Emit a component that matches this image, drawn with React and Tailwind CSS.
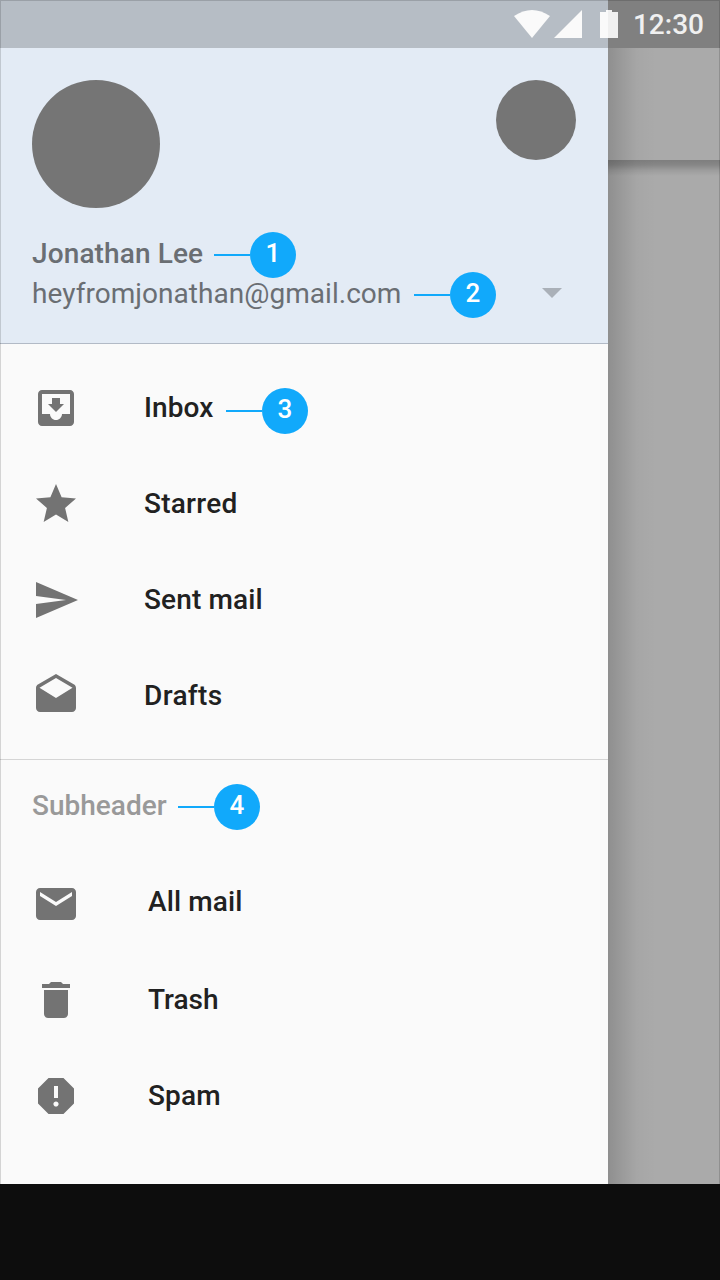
import React from "react";

const ICONS = {
  inbox:
    "M19 3H4.99c-1.11 0-1.98.9-1.98 2L3 19c0 1.1.88 2 1.99 2H19c1.1 0 2-.9 2-2V5c0-1.1-.9-2-2-2zm0 12h-4c0 1.66-1.35 3-3 3s-3-1.34-3-3H4.99V5H19v10zm-3-5h-2V7h-4v3H8l4 4 4-4z",
  star: "M12 17.27L18.18 21l-1.64-7.03L22 9.24l-7.19-.61L12 2 9.19 8.63 2 9.24l5.46 4.73L5.82 21z",
  send: "M2.01 21L23 12 2.01 3 2 10l15 2-15 2z",
  drafts:
    "M21.99 8c0-.72-.37-1.35-.94-1.7L12 1 2.95 6.3C2.38 6.65 2 7.28 2 8v10c0 1.1.9 2 2 2h16c1.1 0 2-.9 2-2l-.01-10zM12 13L3.74 7.84 12 3l8.26 4.84L12 13z",
  mail: "M20 4H4c-1.1 0-1.99.9-1.99 2L2 18c0 1.1.9 2 2 2h16c1.1 0 2-.9 2-2V6c0-1.1-.9-2-2-2zm0 4l-8 5-8-5V6l8 5 8-5v2z",
  trash:
    "M6 19c0 1.1.9 2 2 2h8c1.1 0 2-.9 2-2V7H6v12zM19 4h-3.5l-1-1h-5l-1 1H5v2h14V4z",
  spam: "M15.73 3H8.27L3 8.27v7.46L8.27 21h7.46L21 15.73V8.27L15.73 3zM12 17.3c-.72 0-1.3-.58-1.3-1.3 0-.72.58-1.3 1.3-1.3.72 0 1.3.58 1.3 1.3 0 .72-.58 1.3-1.3 1.3zm1-4.3h-2V7h2v6z",
};

function Icon({ name }) {
  return (
    <svg viewBox="0 0 24 24" className="size-12 shrink-0 fill-[#737373]">
      <path d={ICONS[name]} />
    </svg>
  );
}

function Callout({ n, className }) {
  return (
    <span className={`absolute flex items-center ${className}`}>
      <span className="h-0.5 w-9 bg-[#11a9fb]" />
      <span className="flex size-[46px] items-center justify-center rounded-full bg-[#11a9fb] text-[26px] leading-none font-medium text-white">
        <span className="-mt-1">{n}</span>
      </span>
    </span>
  );
}

function Item({ icon, label, labelClass, children }) {
  return (
    <li className="relative flex h-24 items-center pl-8">
      <Icon name={icon} />
      <span className={`text-[28px] leading-8 font-medium text-[#212121] ${labelClass}`}>{label}</span>
      {children}
    </li>
  );
}

export default function App() {
  return (
    <div className="relative flex h-[1280px] w-[720px] flex-col overflow-hidden bg-[#0d0d0d] font-[Roboto,sans-serif]">
      <div className="relative flex h-[1184px] overflow-hidden bg-[#aaaaaa]">
        <aside className="w-[608px] shrink-0 bg-[#fafafa]">
          <header className="relative h-[344px] border-b border-[#b2bac6] bg-[#e3ebf5] px-8 pt-20">
            <div className="flex items-start justify-between">
              <div className="size-32 rounded-full bg-[#757575]" />
              <div className="size-20 rounded-full bg-[#757575]" />
            </div>
            <div className="mt-[26px] h-10 text-[28px] leading-10 font-medium tracking-[0.12px] text-[#6a6e73]">Jonathan Lee</div>
            <div className="flex h-10 items-center justify-between pr-3.5 text-[28px] leading-10 tracking-[0.04px] text-[#6a6e73]">
              heyfromjonathan@gmail.com
              <svg viewBox="0 0 20 10" className="-mt-0.5 h-2.5 w-5 fill-[#aab0b8]">
                <path d="M0 0h20L10 10z" />
              </svg>
            </div>
            <Callout n="1" className="top-[232px] left-[214px]" />
            <Callout n="2" className="top-[272px] left-[414px]" />
          </header>
          <ul className="h-[416px] border-b border-[#d5d5d5] pt-4">
            <Item icon="inbox" label="Inbox" labelClass="ml-16 tracking-[0.12px]">
              <Callout n="3" className="top-7 left-[226px]" />
            </Item>
            <Item icon="star" label="Starred" labelClass="ml-16 tracking-[0.25px]" />
            <Item icon="send" label="Sent mail" labelClass="ml-16 tracking-[0.12px]" />
            <Item icon="drafts" label="Drafts" labelClass="ml-16 tracking-[0.35px]" />
          </ul>
          <div className="relative flex h-24 items-center pl-8 text-[28px] leading-8 font-medium text-[#999999]">
            <span className="-mt-1">Subheader</span>
            <Callout n="4" className="top-6 left-[178px]" />
          </div>
          <ul>
            <Item icon="mail" label="All mail" labelClass="ml-[68px] -mt-1 tracking-[0.12px]" />
            <Item icon="trash" label="Trash" labelClass="ml-[68px]" />
            <Item icon="spam" label="Spam" labelClass="ml-[68px] tracking-[0.12px]" />
          </ul>
        </aside>
        <div className="relative flex-1 overflow-hidden">
          <div className="h-40" />
          <div className="h-4 bg-[linear-gradient(to_bottom,rgba(0,0,0,0.26),rgba(0,0,0,0.21)_30%,rgba(0,0,0,0.08)_65%,transparent)]" />
          <div className="absolute inset-y-0 left-0 w-12 bg-[linear-gradient(to_right,rgba(0,0,0,0.16),rgba(0,0,0,0.09)_30%,rgba(0,0,0,0.025)_60%,transparent)]" />
        </div>
        <div className="absolute inset-x-0 top-0 flex h-12">
          <div className="w-[608px] bg-[#b6bdc5]" />
          <div className="flex-1 bg-[#808080]" />
        </div>
        <div className="absolute inset-x-0 top-0 flex h-12 items-center justify-end pr-4 text-[28px] leading-8 font-medium text-[#f0f0f0]">
          <svg viewBox="514 10 104 28" className="mr-[15px] h-7 w-[104px] shrink-0">
            <path d="M514 16Q532 4 550 16L532 38z" fill="#fafafa" />
            <path d="M582 10v28h-28z" fill="#fafafa" />
            <path d="M600 12h6v-2h2v28h-8z" fill="#fafafa" />
            <path d="M608 10h4v2h6v26h-10z" fill="#f0f0f0" />
          </svg>
          <span className="mt-0.5">12:30</span>
        </div>
        <div className="pointer-events-none absolute inset-0 border-x border-t border-black/15" />
      </div>
    </div>
  );
}
